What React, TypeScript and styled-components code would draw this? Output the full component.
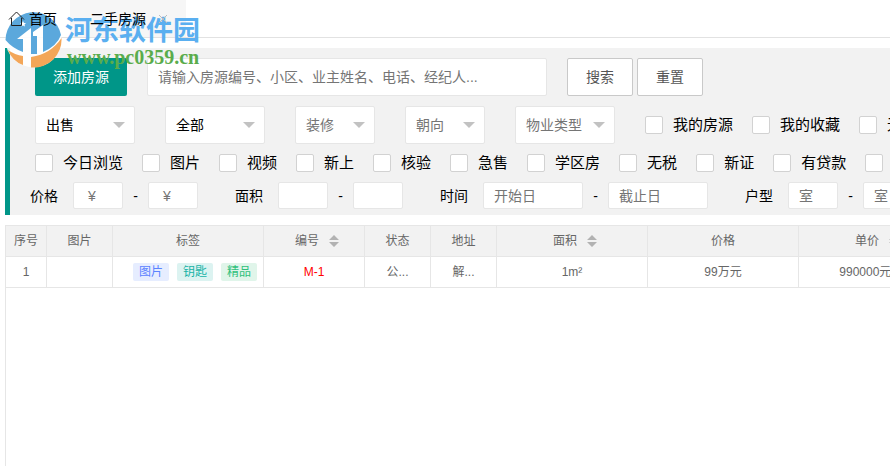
import React from "react";
import styled, { createGlobalStyle } from "styled-components";

const GlobalStyle = createGlobalStyle`
  *, *::before, *::after { box-sizing: border-box; }
  body {
    margin: 0;
    background: #fff;
    color: #000;
    font: 14px/24px "Liberation Sans", "Noto Sans CJK SC", sans-serif;
    overflow: hidden;
  }
  button, input, select { font: inherit; margin: 0; }
`;

const Page = styled.div`
  display: flex;
  flex-direction: column;
  min-height: 100vh;
`;

const TabBar = styled.nav`
  display: flex;
  height: 38px;
  border-bottom: 1px solid #e2e2e2;
`;

const Tab = styled.a<{ $active?: boolean }>`
  display: flex;
  align-items: center;
  padding: ${(p) => (p.$active ? "0 18px 0 20px" : "0 13px 0 8px")};
  background: ${(p) => (p.$active ? "#f6f6f6" : "#fff")};
  color: #000;
  text-decoration: none;
  white-space: nowrap;
`;

const TabContent = styled.span<{ $gap: number }>`
  position: relative;
  z-index: 2;
  display: flex;
  align-items: center;
  gap: ${(p) => p.$gap}px;
`;

const CloseTab = styled.svg`
  width: 10px;
  height: 10px;
`;

const Watermark = styled.div`
  position: absolute;
  z-index: 1;
  top: 11px;
  left: 5px;
  display: flex;
  gap: 3px;
  pointer-events: none;
`;

const WatermarkLogo = styled.svg`
  width: 57px;
  height: 57px;
`;

const WatermarkText = styled.div`
  padding-top: 2px;
`;

const WatermarkName = styled.div`
  color: #5aaff0;
  font: 700 27px/32px "Noto Sans CJK SC", sans-serif;
  white-space: nowrap;
`;

const WatermarkUrl = styled.div`
  padding-left: 2px;
  color: #5aac4c;
  font: 700 20px/24px "Liberation Serif", serif;
`;

const FilterPanel = styled.form`
  display: flex;
  flex-direction: column;
  gap: 10px;
  margin: 10px 0 10px 5px;
  padding: 10px 0 6px 20px;
  border-left: 5px solid #009688;
  background: #f2f2f2;
  overflow: hidden;
  white-space: nowrap;
`;

const FilterRow = styled.div<{ $gap: number; $inset?: boolean }>`
  display: flex;
  align-items: center;
  gap: ${(p) => p.$gap}px;
  padding-left: ${(p) => (p.$inset ? 5 : 0)}px;
  & > * { flex-shrink: 0; }
`;

const Button = styled.button<{ $primary?: boolean }>`
  height: 38px;
  padding: 0 18px;
  border: ${(p) => (p.$primary ? "0" : "1px solid #c9c9c9")};
  border-radius: 2px;
  background: ${(p) => (p.$primary ? "#009688" : "#fff")};
  color: ${(p) => (p.$primary ? "#fff" : "#555")};
`;

const ButtonGroup = styled.div`
  display: flex;
  gap: 4px;
`;

const TextField = styled.input<{ $width: number; $small?: boolean }>`
  width: ${(p) => p.$width}px;
  height: ${(p) => (p.$small ? 27 : 38)}px;
  padding: 0 10px;
  border: 1px solid #e6e6e6;
  border-radius: 2px;
  background: #fff;
  &::placeholder { color: #757575; opacity: 1; }
`;

const SelectBox = styled.div<{ $width: number }>`
  display: grid;
  align-items: center;
  width: ${(p) => p.$width}px;
  & > * { grid-area: 1 / 1; }
`;

const Select = styled.select<{ $muted?: boolean }>`
  appearance: none;
  width: 100%;
  height: 38px;
  padding: 0 10px;
  border: 1px solid #e6e6e6;
  border-radius: 2px;
  background: #fff;
  color: ${(p) => (p.$muted ? "#757575" : "#000")};
`;

const Caret = styled.svg`
  justify-self: end;
  width: 12px;
  height: 6px;
  margin-right: 10px;
  pointer-events: none;
`;

const CheckLabel = styled.label`
  display: flex;
  align-items: center;
  gap: 10px;
  height: 18px;
  font-size: 15px;
`;

const CheckBox = styled.input`
  appearance: none;
  width: 18px;
  height: 18px;
  border: 1px solid #d2d2d2;
  border-radius: 2px;
  background: #fff;
  &:checked { background: #009688; }
`;

const CheckList = styled.div`
  display: flex;
  gap: 19px;
`;

const Range = styled.fieldset`
  display: flex;
  align-items: center;
  margin: 0;
  padding: 0;
  border: 0;
`;

const RangeName = styled.label`
  margin-right: 15px;
`;

const Dash = styled.span`
  width: 25px;
  text-align: center;
`;

const TableArea = styled.main`
  flex: 1;
  margin-left: 5px;
  border-left: 1px solid #e6e6e6;
  border-top: 1px solid #e6e6e6;
  overflow: hidden;
`;

const Table = styled.table`
  table-layout: fixed;
  width: 944px;
  border-collapse: separate;
  border-spacing: 0;
  color: #666;
  font-size: 12px;
  line-height: 20px;
`;

const Column = styled.col<{ $width: number }>`
  width: ${(p) => p.$width}px;
`;

const Cell = styled.td<{ $red?: boolean }>`
  height: 31px;
  padding: 0;
  border-right: 1px solid #e6e6e6;
  border-bottom: 1px solid #e6e6e6;
  color: ${(p) => (p.$red ? "#f00" : "inherit")};
  font-weight: 400;
  text-align: center;
  white-space: nowrap;
`;

const HeadCell = styled(Cell).attrs({ as: "th" })`
  background: #f2f2f2;
`;

const HeadContent = styled.div<{ $sortable?: boolean }>`
  display: flex;
  align-items: center;
  justify-content: center;
  gap: 10px;
  padding-left: ${(p) => (p.$sortable ? 6 : 0)}px;
`;

const SortIcon = styled.svg`
  width: 10px;
  height: 12px;
`;

const TagList = styled.div`
  display: flex;
  gap: 8px;
  padding-left: 20px;
`;

const Tag = styled.span<{ $color: string; $background: string }>`
  padding: 0 6px;
  border-radius: 2px;
  background: ${(p) => p.$background};
  color: ${(p) => p.$color};
  line-height: 18px;
`;

const selects = [
  { label: "出售", width: 100 },
  { label: "全部", width: 100 },
  { label: "装修", width: 80, muted: true },
  { label: "朝向", width: 80, muted: true },
  { label: "物业类型", width: 100, muted: true },
];

const ownerChecks = ["我的房源", "我的收藏", "无效"];
const featureChecks = ["今日浏览", "图片", "视频", "新上", "核验", "急售", "学区房", "无税", "新证", "有贷款", "钥匙"];

const ranges = [
  { id: "price", label: "价格", width: 50, from: " ¥", to: " ¥" },
  { id: "area", label: "面积", width: 50, from: "", to: "" },
  { id: "date", label: "时间", width: 100, from: "开始日", to: "截止日" },
  { id: "rooms", label: "户型", width: 50, from: "室", to: "室" },
];

const columns = [
  { label: "序号", width: 41 },
  { label: "图片", width: 66 },
  { label: "标签", width: 151 },
  { label: "编号", width: 101, sortable: true },
  { label: "状态", width: 66 },
  { label: "地址", width: 66 },
  { label: "面积", width: 151, sortable: true },
  { label: "价格", width: 151 },
  { label: "单价", width: 151, sortable: true },
];

const tags = [
  { label: "图片", color: "#5b83ff", background: "#e6edff" },
  { label: "钥匙", color: "#16b2a6", background: "#dcf3f1" },
  { label: "精品", color: "#2fc07b", background: "#e0f5ea" },
];

function Checks({ items }: { items: string[] }) {
  return (
    <CheckList>
      {items.map((item) => (
        <CheckLabel key={item}>
          <CheckBox type="checkbox" />
          {item}
        </CheckLabel>
      ))}
    </CheckList>
  );
}

function SiteWatermark() {
  return (
    <Watermark>
      <WatermarkLogo viewBox="0 0 57 57" aria-hidden="true">
        <circle cx="28.5" cy="28.5" r="28" fill="#fff" fillOpacity="0.9" />
        <path d="M0.5 29A28 28 0 0 1 56 24Q52 35 38 41V14L28 21V25H32V43L26 43V17L12 28H18V41Q7 37 0.5 29Z" fill="#5ba8dc" />
        <path d="M3 39Q10 44 18 45V54Q7 50 3 39Z" fill="#f3a658" />
        <path d="M26 46Q46 43 56.5 27A28 28 0 0 1 26 56.5Z" fill="#f3a658" />
        <path d="M18 10L19 12H21L19.500 13.500L20 15.500L18 14.500L16 15.500L16.500 13.500L15 12H17Z" fill="#fff" />
      </WatermarkLogo>
      <WatermarkText>
        <WatermarkName>河东软件园</WatermarkName>
        <WatermarkUrl>www.pc0359.cn</WatermarkUrl>
      </WatermarkText>
    </Watermark>
  );
}

export default function App() {
  return (
    <Page>
      <GlobalStyle />
      <TabBar>
        <Tab href="#home">
          <TabContent $gap={4}>
            <svg width="17" height="16" viewBox="0 0 17 16" fill="none" stroke="#222" aria-hidden="true">
              <path d="M1 8.5L8.5 1L16 8.5M3.5 7V14.5H13.500V7" />
            </svg>
            首页
          </TabContent>
        </Tab>
        <Tab href="#second-hand" $active>
          <TabContent $gap={12}>
            二手房源
            <CloseTab viewBox="0 0 10 10" stroke="#bbb" aria-hidden="true">
              <path d="M1 1L9 9M9 1L1 9" />
            </CloseTab>
          </TabContent>
        </Tab>
      </TabBar>

      <FilterPanel>
        <FilterRow $gap={20} $inset>
          <Button type="button" $primary>添加房源</Button>
          <TextField $width={400} aria-label="关键字" placeholder="请输入房源编号、小区、业主姓名、电话、经纪人..." />
          <ButtonGroup>
            <Button type="button">搜索</Button>
            <Button type="reset">重置</Button>
          </ButtonGroup>
        </FilterRow>
        <FilterRow $gap={30} $inset>
          {selects.map((s) => (
            <SelectBox key={s.label} $width={s.width}>
              <Select aria-label={s.label} $muted={s.muted}>
                <option>{s.label}</option>
              </Select>
              <Caret viewBox="0 0 12 6" aria-hidden="true">
                <path d="M0 0H12L6 6Z" fill="#c2c2c2" />
              </Caret>
            </SelectBox>
          ))}
          <Checks items={ownerChecks} />
        </FilterRow>
        <FilterRow $gap={19} $inset>
          <Checks items={featureChecks} />
        </FilterRow>
        <FilterRow $gap={37}>
          {ranges.map((r) => (
            <Range key={r.id}>
              <RangeName htmlFor={r.id}>{r.label}</RangeName>
              <TextField id={r.id} $small $width={r.width} placeholder={r.from} />
              <Dash>-</Dash>
              <TextField $small $width={r.width} placeholder={r.to} aria-label={r.label} />
            </Range>
          ))}
        </FilterRow>
      </FilterPanel>

      <TableArea>
        <Table>
          <colgroup>
            {columns.map((c) => (
              <Column key={c.label} $width={c.width} />
            ))}
          </colgroup>
          <thead>
            <tr>
              {columns.map((c) => (
                <HeadCell key={c.label}>
                  <HeadContent $sortable={c.sortable}>
                    {c.label}
                    {c.sortable && (
                      <SortIcon viewBox="0 0 10 12" fill="#b2b2b2" aria-hidden="true">
                        <path d="M0 5L5 0L10 5ZM0 7H10L5 12Z" />
                      </SortIcon>
                    )}
                  </HeadContent>
                </HeadCell>
              ))}
            </tr>
          </thead>
          <tbody>
            <tr>
              <Cell>1</Cell>
              <Cell />
              <Cell>
                <TagList>
                  {tags.map((t) => (
                    <Tag key={t.label} $color={t.color} $background={t.background}>{t.label}</Tag>
                  ))}
                </TagList>
              </Cell>
              <Cell $red>M-1</Cell>
              <Cell>公...</Cell>
              <Cell>解...</Cell>
              <Cell>1m²</Cell>
              <Cell>99万元</Cell>
              <Cell>990000元/m²</Cell>
            </tr>
          </tbody>
        </Table>
      </TableArea>

      <SiteWatermark />
    </Page>
  );
}
